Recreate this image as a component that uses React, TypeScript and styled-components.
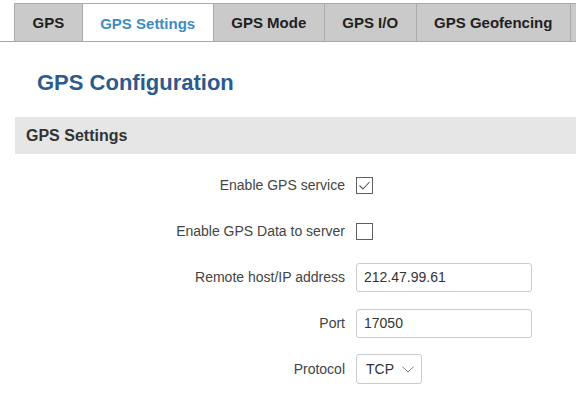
import React from "react";
import styled, { createGlobalStyle } from "styled-components";

const GlobalStyle = createGlobalStyle`
  html, body {
    margin: 0;
    padding: 0;
    background: #ffffff;
    font-family: "Liberation Sans", Arial, sans-serif;
  }
`;

const Page = styled.div`
  width: 576px;
  height: 393px;
  overflow: hidden;
`;

const TabBar = styled.nav`
  display: flex;
  padding: 3px 0 0 14px;
  border-bottom: 1px solid #a9a9a9;
  white-space: nowrap;
  overflow: hidden;
`;

const Tab = styled.div<{ $active?: boolean }>`
  flex: none;
  box-sizing: border-box;
  min-width: 40px;
  padding: 0 17.5px;
  display: flex;
  align-items: center;
  font-size: 15px;
  font-weight: bold;
  color: ${(p) => (p.$active ? "#3e8dc2" : "#1f1f1f")};
  background: ${(p) => (p.$active ? "#ffffff" : "#cacaca")};
  border: 1px solid #ababab;
  border-bottom: none;
  margin-bottom: ${(p) => (p.$active ? "-1px" : "0")};
  height: ${(p) => (p.$active ? "39px" : "38px")};
  & + & {
    border-left: none;
  }
`;

const Title = styled.h1`
  margin: 28px 0 0 37px;
  font-size: 22px;
  line-height: 26px;
  font-weight: bold;
  color: #2b5b8d;
`;

const SectionBar = styled.div`
  margin: 21px 0 0 15px;
  height: 37px;
  display: flex;
  align-items: center;
  padding-left: 11px;
  background: #e6e6e6;
  font-size: 16px;
  font-weight: bold;
  color: #333333;
`;

const Form = styled.div`
  padding-top: 8px;
`;

const Row = styled.div`
  display: grid;
  grid-template-columns: 345px auto;
  column-gap: 11px;
  align-items: center;
  height: 46px;
`;

const Label = styled.label`
  text-align: right;
  font-size: 14px;
  color: #444444;
`;

const Box = styled.div`
  width: 17px;
  height: 17px;
  box-sizing: border-box;
  border: 1px solid #5f5f5f;
  display: flex;
  align-items: center;
  justify-content: center;
  background: #fff;
`;

const TextInput = styled.div<{ $width: number }>`
  width: ${(p) => p.$width}px;
  height: 29px;
  box-sizing: border-box;
  border: 1px solid #cccccc;
  border-radius: 3px;
  display: flex;
  align-items: center;
  padding-left: 7px;
  font-size: 14px;
  color: #333333;
`;

const Select = styled(TextInput)`
  height: 30px;
  padding-left: 9px;
  gap: 8px;
`;

const Checkbox = ({ checked }: { checked?: boolean }) => (
  <Box>
    {checked && (
      <svg width="13" height="11" viewBox="0 0 13 11">
        <path d="M1.5 5.5 L5 9 L11.5 2" fill="none" stroke="#555" strokeWidth="1.1" />
      </svg>
    )}
  </Box>
);

const Chevron = () => (
  <svg width="12" height="7" viewBox="0 0 12 7">
    <path d="M0.5 0.8 L6 6 L11.5 0.8" fill="none" stroke="#777" strokeWidth="1" />
  </svg>
);

const tabs = ["GPS", "GPS Settings", "GPS Mode", "GPS I/O", "GPS Geofencing", ""];

export default function App() {
  return (
    <Page>
      <GlobalStyle />
      <TabBar>
        {tabs.map((t, i) => (
          <Tab key={i} $active={t === "GPS Settings"}>
            {t}
          </Tab>
        ))}
      </TabBar>
      <Title>GPS Configuration</Title>
      <SectionBar>GPS Settings</SectionBar>
      <Form>
        <Row>
          <Label>Enable GPS service</Label>
          <Checkbox checked />
        </Row>
        <Row>
          <Label>Enable GPS Data to server</Label>
          <Checkbox />
        </Row>
        <Row>
          <Label>Remote host/IP address</Label>
          <TextInput $width={176}>212.47.99.61</TextInput>
        </Row>
        <Row>
          <Label>Port</Label>
          <TextInput $width={176}>17050</TextInput>
        </Row>
        <Row>
          <Label>Protocol</Label>
          <Select $width={66}>
            TCP
            <Chevron />
          </Select>
        </Row>
      </Form>
    </Page>
  );
}
